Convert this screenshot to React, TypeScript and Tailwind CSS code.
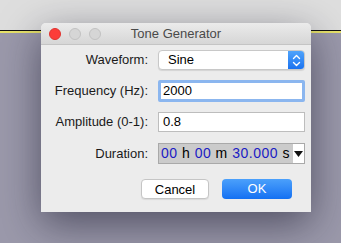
import React from "react";

// Tone Generator dialog over a desktop-ish backdrop

const font = { fontFamily: '"Liberation Sans", Arial, sans-serif' };

function Row({ label, children }: { label: string; children: React.ReactNode }) {
  return (
    <div className="flex items-center">
      <div className="w-[107px] shrink-0 pr-0 text-right text-[13px] text-[#1a1a1a]">{label}</div>
      <div className="ml-[10px] w-[147px]">{children}</div>
    </div>
  );
}

export default function App() {
  return (
    <div className="relative w-[341px] h-[243px] overflow-hidden bg-[#9b99ab]" style={font}>
      {/* backdrop */}
      <div className="h-[30px] bg-[#dedede]" />
      <div className="h-[1px] bg-[#111]" />
      <div className="h-[2px] bg-[#e8e36a]" />

      {/* dialog window */}
      <div className="absolute left-[41px] top-[23px] w-[270px] h-[189px] rounded-t-[5px] bg-[#ececec] shadow-[0_12px_40px_rgba(20,20,40,0.55)] flex flex-col">
        <div className="relative h-[22px] rounded-t-[5px] bg-gradient-to-b from-[#ebebeb] to-[#d6d6d6] border-b border-[#c4c4c4] flex items-center px-[8px] gap-[8px]">
          <div className="w-[12px] h-[12px] rounded-full bg-[#fc3d39] border border-[#e0332f]" />
          <div className="w-[12px] h-[12px] rounded-full bg-[#d6d6d6] border border-[#c2c2c2]" />
          <div className="w-[12px] h-[12px] rounded-full bg-[#d6d6d6] border border-[#c2c2c2]" />
          <div className="absolute inset-0 flex items-center justify-center text-[13px] text-[#4a4a4a]">
            Tone Generator
          </div>
        </div>

        <div className="flex flex-col pt-[5px] gap-[11px]">
          <Row label="Waveform:">
            <div className="h-[20px] flex rounded-[4px] border border-[#c8c8c8] bg-white shadow-[0_1px_1px_rgba(0,0,0,0.1)] overflow-hidden">
              <div className="flex-1 flex items-center pl-[9px] text-[13px] text-black">Sine</div>
              <div className="w-[16px] bg-gradient-to-b from-[#4fa3fb] to-[#1a72f0] flex items-center justify-center">
                <svg width="9" height="13" viewBox="0 0 9 13" fill="none" stroke="white" strokeWidth="1.4" strokeLinecap="round" strokeLinejoin="round">
                  <path d="M1.5 4.5 L4.5 1.5 L7.5 4.5" />
                  <path d="M1.5 8.5 L4.5 11.5 L7.5 8.5" />
                </svg>
              </div>
            </div>
          </Row>
          <Row label="Frequency (Hz):">
            <div className="h-[22px] -my-[1px] rounded-[2px] border-[3px] border-[#8bb6ef] bg-white flex items-center pl-[2px] text-[13px] text-black">
              2000
            </div>
          </Row>
          <Row label="Amplitude (0-1):">
            <div className="h-[20px] border border-[#bdbdbd] bg-white flex items-center pl-[4px] text-[13px] text-black">
              0.8
            </div>
          </Row>
          <Row label="Duration:">
            <div className="h-[21px] border border-[#a9a9a9] bg-[#cbcbcb] flex items-center pl-[2px] text-[14px] text-black">
              <span className="flex-1 tracking-[0.5px] whitespace-nowrap">
                <span className="text-[#1b1bc4]">00</span> h <span className="text-[#1b1bc4]">00</span> m{" "}
                <span className="text-[#1b1bc4]">30.000</span> s
              </span>
              <div className="w-[11px] h-[19px] bg-white flex items-center justify-center">
                <svg width="9" height="6" viewBox="0 0 9 6">
                  <path d="M0 0 L9 0 L4.5 6 Z" fill="#111" />
                </svg>
              </div>
            </div>
          </Row>
        </div>

        <div className="flex justify-end gap-[13px] pr-[19px] mt-[15px]">
          <button className="w-[68px] h-[20px] rounded-[4px] border border-[#c5c5c5] bg-white text-[13px] text-black shadow-[0_1px_1px_rgba(0,0,0,0.08)]">
            Cancel
          </button>
          <button className="w-[70px] h-[20px] rounded-[4px] bg-gradient-to-b from-[#4ba0fb] to-[#1270f2] text-[13px] text-white">
            OK
          </button>
        </div>
      </div>
    </div>
  );
}
